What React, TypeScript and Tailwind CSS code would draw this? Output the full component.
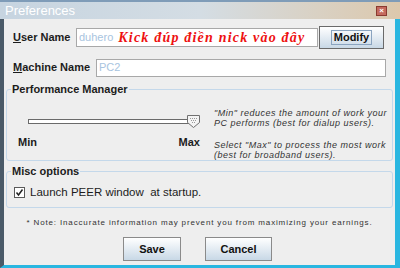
import React from "react"

function Thumb() {
  return (
    <svg width="13" height="13" viewBox="0 0 13 13" className="shrink-0 -ml-[3px]">
      <path d="M0.5 0.5 H12.5 V7.5 L6.5 12.5 L0.5 7.5 Z" fill="#f4f4f4" stroke="#707070" />
      <g fill="#9a9a9a">
        <rect x="3" y="3" width="1" height="1" />
        <rect x="5" y="3" width="1" height="1" />
        <rect x="7" y="3" width="1" height="1" />
        <rect x="9" y="3" width="1" height="1" />
        <rect x="4" y="5" width="1" height="1" />
        <rect x="6" y="5" width="1" height="1" />
        <rect x="8" y="5" width="1" height="1" />
        <rect x="5" y="7" width="1" height="1" />
        <rect x="7" y="7" width="1" height="1" />
      </g>
    </svg>
  )
}

export default function App() {
  const bold = "font-bold text-[11px] text-[#1c1c1c]"
  return (
    <div
      className="w-[400px] h-[268px] flex flex-col overflow-hidden bg-[#1a4a6a]"
      style={{ fontFamily: '"Liberation Sans", Arial, sans-serif' }}
    >
      {/* Title bar */}
      <div className="h-[19px] flex items-center pl-[5px] pr-[13px] bg-gradient-to-r from-[#c6d4e0] via-[#d4dde4] to-[#dcc8ac] border-t-[2px] border-[#7f9cb8]">
        <span className="text-[13px] text-white flex-1 leading-none">Preferences</span>
        <div className="w-[11px] h-[10px] bg-[#c46a5e] border border-[#8a3a30] flex items-center justify-center text-white text-[8px] leading-none font-bold">
          ×
        </div>
      </div>

      {/* Body */}
      <div className="flex-1 flex flex-col bg-[#eeeeee] border-l-[4px] border-l-[#4a5a68] border-r-[5px] border-r-[#29b6e0] border-b-[3px] border-b-[#29b6e0] pl-[1px] pr-[1px] pt-[7px]">
        {/* User name row */}
        <div className="flex items-center h-[22px] pl-[8px]">
          <span className={`${bold} w-[63px]`}>
            <u>U</u>ser Name
          </span>
          <div className="w-[242px] h-[19px] bg-white border border-[#a8a8a8] flex items-center pl-[2px] gap-[5px] overflow-hidden">
            <span className="text-[11px] text-[#a8c4e0]">duhero</span>
            <span
              className="text-[14px] font-bold italic text-[#ee1111] whitespace-nowrap tracking-[1.2px]"
              style={{ fontFamily: '"Liberation Serif", "Times New Roman", serif' }}
            >
              Kick đúp điền nick vào đây
            </span>
          </div>
          <div className="ml-[1px] w-[65px] h-[23px] border border-[#6a6a6a] bg-gradient-to-b from-white to-[#c8d8e6] flex items-center justify-center">
            <span className="border border-[#8aa4c0] px-[2px] text-[11px] font-bold leading-[13px] text-[#111]">Modify</span>
          </div>
        </div>

        {/* Machine name row */}
        <div className="flex items-center h-[19px] mt-[10px] pl-[8px]">
          <span className={`${bold} w-[83px]`}>
            <u>M</u>achine Name
          </span>
          <div className="w-[290px] h-[18px] bg-white border border-[#a8a8a8] flex items-center pl-[2px]">
            <span className="text-[11px] text-[#a8c4e0]">PC2</span>
          </div>
        </div>

        {/* Performance Manager */}
        <fieldset className="mt-[6px] mx-[1px] h-[78px] border border-[#c4d8ea] rounded-[3px] px-[3px]">
          <legend className={`${bold} px-[1px] ml-[1px] leading-[13px]`}>Performance Manager</legend>
          <div className="flex">
            <div className="w-[196px] flex flex-col pt-[19px] pl-[8px]">
              <div className="flex items-center pl-[10px]">
                <div className="w-[162px] h-[5px] border border-[#6a6a6a] bg-white" />
                <Thumb />
              </div>
              <div className="flex justify-between mt-[6px] pr-[6px]">
                <span className={bold}>Min</span>
                <span className={bold}>Max</span>
              </div>
            </div>
            <div className="flex flex-col pl-[8px] pt-[12px] text-[9px] italic text-[#333] leading-[10px] tracking-[0.5px] whitespace-nowrap">
              <span>"Min" reduces the amount of work your</span>
              <span>PC performs (best for dialup users).</span>
              <span className="mt-[12px]">Select "Max" to process the most work</span>
              <span>(best for broadband users).</span>
            </div>
          </div>
        </fieldset>

        {/* Misc options */}
        <fieldset className="mt-[4px] mx-[1px] h-[43px] border border-[#c4d8ea] rounded-[3px] px-[3px]">
          <legend className={`${bold} px-[1px] ml-[1px] leading-[13px]`}>Misc options</legend>
          <div className="flex items-center pt-[6px] pl-[4px] gap-[5px]">
            <div className="w-[11px] h-[11px] border border-[#5a5a5a] bg-white flex items-center justify-center">
              <svg width="9" height="9" viewBox="0 0 9 9">
                <path d="M1.5 4.5 L3.5 7 L7.5 1.5" stroke="#222" strokeWidth="1.5" fill="none" />
              </svg>
            </div>
            <span className="text-[11.5px] text-[#1c1c1c]">Launch PEER window&nbsp; at startup.</span>
          </div>
        </fieldset>

        <div className="text-center text-[8px] tracking-[0.85px] text-[#333] mt-[9px] whitespace-nowrap">
          * Note: Inaccurate information may prevent you from maximizing your earnings.
        </div>

        <div className="flex justify-center gap-[24px] mt-[8px] pr-[4px]">
          <div className="w-[58px] h-[24px] border border-[#8a8a8a] bg-gradient-to-b from-white to-[#c8d8e6] flex items-center justify-center text-[11px] font-bold text-[#111]">
            Save
          </div>
          <div className="w-[67px] h-[24px] border border-[#8a8a8a] bg-gradient-to-b from-white to-[#c8d8e6] flex items-center justify-center text-[11px] font-bold text-[#111]">
            Cancel
          </div>
        </div>
      </div>
    </div>
  )
}
